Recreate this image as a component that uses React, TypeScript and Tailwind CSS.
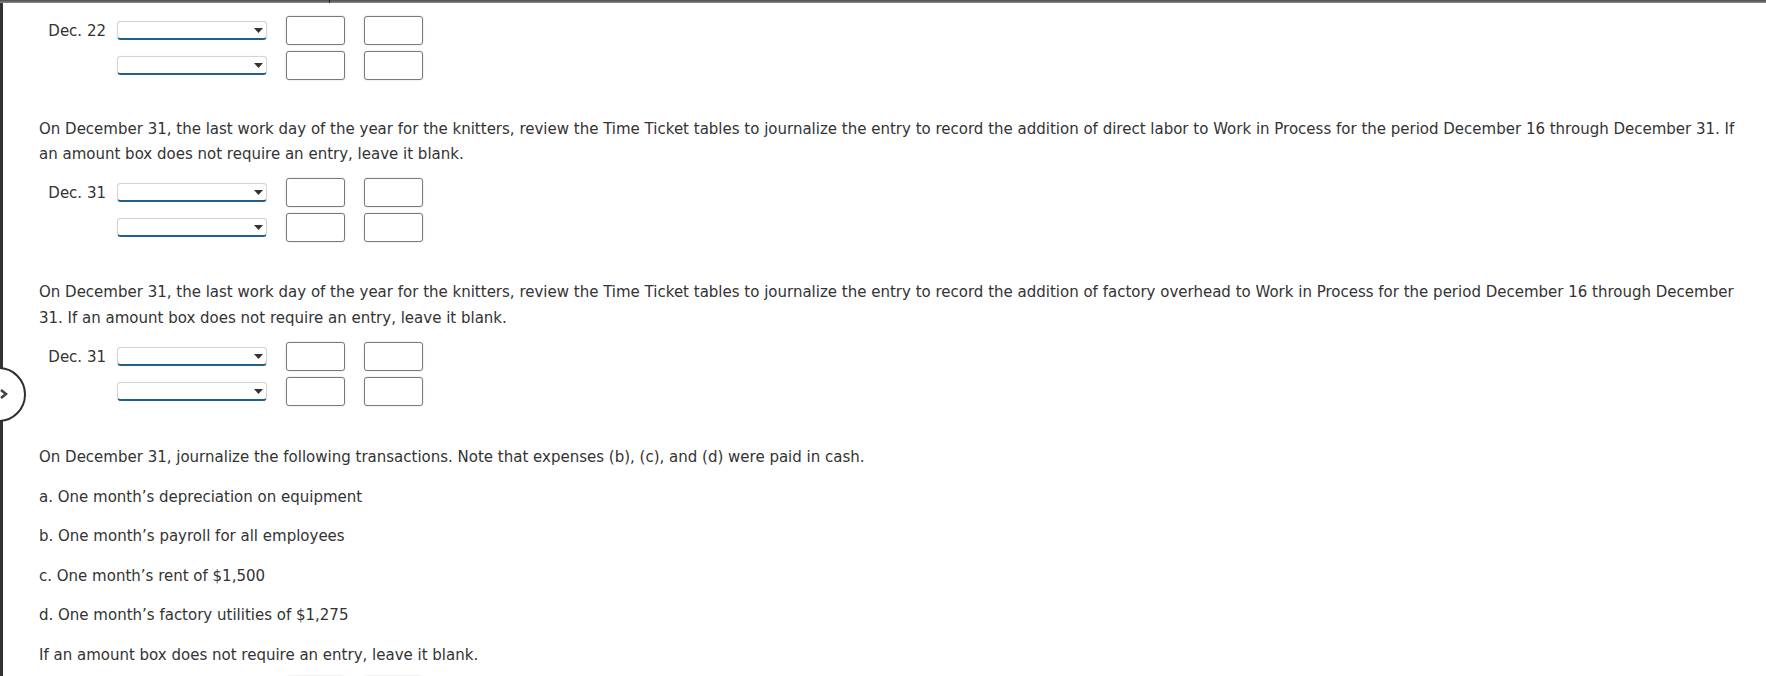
import React from "react";

interface JournalBlockProps {
  date: string;
  rows?: number;
}

const SelectBox = () => {
  return (
    <div className="relative h-[19px] w-[150px] rounded-[4px] border border-[#d4d4d4] border-b-2 border-b-[#1d5f91] bg-white shadow-[0_0_1px_rgba(0,0,0,0.15)]">
      <svg
        className="absolute right-[3px] top-[6px]"
        width="9"
        height="5"
        viewBox="0 0 9 5"
      >
        <polygon points="0,0 9,0 4.5,5" fill="#333" />
      </svg>
    </div>
  );
};

const AmountBox = () => {
  return (
    <div className="h-[29px] w-[59px] rounded-[3px] border border-[#7a7a7a] bg-white shadow-[0_0_2px_rgba(0,0,0,0.18)]" />
  );
};

const JournalBlock = ({ date, rows = 2 }: JournalBlockProps) => {
  return (
    <div className="flex flex-col gap-[6px]">
      {Array.from({ length: rows }).map((_, index) => {
        return (
          <div className="flex h-[29px] items-center" key={index}>
            <div className="w-[67px] text-right leading-[20px]">
              {index === 0 ? date : ""}
            </div>
            <div className="ml-[11px] -mt-[1px]">
              <SelectBox />
            </div>
            <div className="ml-[19px]">
              <AmountBox />
            </div>
            <div className="ml-[19px]">
              <AmountBox />
            </div>
          </div>
        );
      })}
    </div>
  );
};

const App = () => {
  const items = [
    "a. One month\u2019s depreciation on equipment",
    "b. One month\u2019s payroll for all employees",
    "c. One month\u2019s rent of $1,500",
    "d. One month\u2019s factory utilities of $1,275",
  ];

  return (
    <div className="relative h-[676px] w-full overflow-hidden bg-white font-['Verdana','DejaVu_Sans',sans-serif] text-[15px] text-[#333]">
      {/* top frame bar */}
      <div className="flex h-[3px] w-full bg-linear-to-b from-[#4a4a4a] to-[#8c8c8c]">
        <div className="ml-[329px] h-full w-px bg-[#1f1f1f]" />
      </div>

      <div className="h-[673px] border-l-[3px] border-[#333] pl-[36px] pt-[13px] pr-[10px]">
        <JournalBlock date="Dec. 22" />

        <p className="mt-[37px] leading-[25px]">
          On December 31, the last work day of the year for the knitters,
          review the Time Ticket tables to journalize the entry to record the
          addition of direct labor to Work in Process for the period December
          16 through December 31. If an amount box does not require an entry,
          leave it blank.
        </p>

        <div className="mt-[11px]">
          <JournalBlock date="Dec. 31" />
        </div>

        <p className="mt-[37px] leading-[26px]">
          On December 31, the last work day of the year for the knitters,
          review the Time Ticket tables to journalize the entry to record the
          addition of factory overhead to Work in Process for the period
          December 16 through December 31. If an amount box does not require an
          entry, leave it blank.
        </p>

        <div className="mt-[11px]">
          <JournalBlock date="Dec. 31" />
        </div>

        <div className="mt-[39px] flex flex-col gap-[14.5px] leading-[25px]">
          <p>
            On December 31, journalize the following transactions. Note that
            expenses (b), (c), and (d) were paid in cash.
          </p>
          {items.map((item, index) => {
            return <p key={index}>{item}</p>;
          })}
          <p>If an amount box does not require an entry, leave it blank.</p>
        </div>

        <div className="mt-[8px]">
          <JournalBlock date="" />
        </div>
      </div>

      {/* side navigation toggle */}
      <div className="absolute left-[-29px] top-[367px] h-[55px] w-[55px] rounded-full border-[2.5px] border-[#2e2e2e] bg-white" />
      <svg
        className="absolute left-0 top-[389px]"
        width="8"
        height="10"
        viewBox="0 0 8 10"
      >
        <polyline
          points="1,1 6,5 1,9"
          fill="none"
          stroke="#444"
          strokeWidth="2.6"
        />
      </svg>
    </div>
  );
};

export default App;
